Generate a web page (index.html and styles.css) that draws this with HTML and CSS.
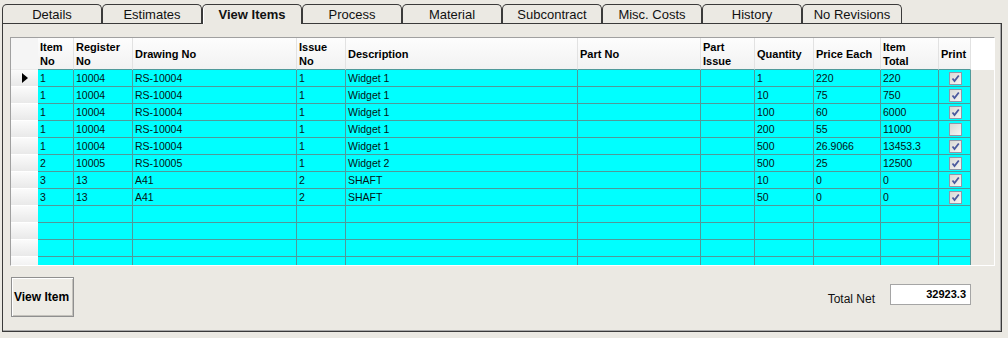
FILE: index.html
```html
<!DOCTYPE html>
<html>
<head>
<meta charset="utf-8">
<link rel="stylesheet" href="styles.css">
</head>
<body>
<div class="tabs">
  <div class="tab">Details</div>
  <div class="tab">Estimates</div>
  <div class="tab active">View Items</div>
  <div class="tab">Process</div>
  <div class="tab">Material</div>
  <div class="tab">Subcontract</div>
  <div class="tab">Misc. Costs</div>
  <div class="tab">History</div>
  <div class="tab">No Revisions</div>
</div>
<div class="panel">
  <div class="grid">
    <div class="hrow">
      <div class="hc rh"></div>
      <div class="hc">Item<br>No</div>
      <div class="hc">Register<br>No</div>
      <div class="hc">Drawing No</div>
      <div class="hc">Issue<br>No</div>
      <div class="hc">Description</div>
      <div class="hc">Part No</div>
      <div class="hc">Part<br>Issue</div>
      <div class="hc">Quantity</div>
      <div class="hc">Price Each</div>
      <div class="hc">Item<br>Total</div>
      <div class="hc">Print</div>
    </div>
    <div class="row"><div class="rh"><span class="arrow"></span></div><div class="c">1</div><div class="c">10004</div><div class="c">RS-10004</div><div class="c">1</div><div class="c">Widget 1</div><div class="c"></div><div class="c"></div><div class="c">1</div><div class="c">220</div><div class="c">220</div><div class="c cb"><span class="box"><svg width="11" height="11" viewBox="0 0 11 11"><path d="M2.5 5.5 L4.5 8 L8.8 2.5" fill="none" stroke="#4b5a9e" stroke-width="1.8"/></svg></span></div></div>
    <div class="row"><div class="rh"></div><div class="c">1</div><div class="c">10004</div><div class="c">RS-10004</div><div class="c">1</div><div class="c">Widget 1</div><div class="c"></div><div class="c"></div><div class="c">10</div><div class="c">75</div><div class="c">750</div><div class="c cb"><span class="box"><svg width="11" height="11" viewBox="0 0 11 11"><path d="M2.5 5.5 L4.5 8 L8.8 2.5" fill="none" stroke="#4b5a9e" stroke-width="1.8"/></svg></span></div></div>
    <div class="row"><div class="rh"></div><div class="c">1</div><div class="c">10004</div><div class="c">RS-10004</div><div class="c">1</div><div class="c">Widget 1</div><div class="c"></div><div class="c"></div><div class="c">100</div><div class="c">60</div><div class="c">6000</div><div class="c cb"><span class="box"><svg width="11" height="11" viewBox="0 0 11 11"><path d="M2.5 5.5 L4.5 8 L8.8 2.5" fill="none" stroke="#4b5a9e" stroke-width="1.8"/></svg></span></div></div>
    <div class="row"><div class="rh"></div><div class="c">1</div><div class="c">10004</div><div class="c">RS-10004</div><div class="c">1</div><div class="c">Widget 1</div><div class="c"></div><div class="c"></div><div class="c">200</div><div class="c">55</div><div class="c">11000</div><div class="c cb"><span class="box"></span></div></div>
    <div class="row"><div class="rh"></div><div class="c">1</div><div class="c">10004</div><div class="c">RS-10004</div><div class="c">1</div><div class="c">Widget 1</div><div class="c"></div><div class="c"></div><div class="c">500</div><div class="c">26.9066</div><div class="c">13453.3</div><div class="c cb"><span class="box"><svg width="11" height="11" viewBox="0 0 11 11"><path d="M2.5 5.5 L4.5 8 L8.8 2.5" fill="none" stroke="#4b5a9e" stroke-width="1.8"/></svg></span></div></div>
    <div class="row"><div class="rh"></div><div class="c">2</div><div class="c">10005</div><div class="c">RS-10005</div><div class="c">1</div><div class="c">Widget 2</div><div class="c"></div><div class="c"></div><div class="c">500</div><div class="c">25</div><div class="c">12500</div><div class="c cb"><span class="box"><svg width="11" height="11" viewBox="0 0 11 11"><path d="M2.5 5.5 L4.5 8 L8.8 2.5" fill="none" stroke="#4b5a9e" stroke-width="1.8"/></svg></span></div></div>
    <div class="row"><div class="rh"></div><div class="c">3</div><div class="c">13</div><div class="c">A41</div><div class="c">2</div><div class="c">SHAFT</div><div class="c"></div><div class="c"></div><div class="c">10</div><div class="c">0</div><div class="c">0</div><div class="c cb"><span class="box"><svg width="11" height="11" viewBox="0 0 11 11"><path d="M2.5 5.5 L4.5 8 L8.8 2.5" fill="none" stroke="#4b5a9e" stroke-width="1.8"/></svg></span></div></div>
    <div class="row"><div class="rh"></div><div class="c">3</div><div class="c">13</div><div class="c">A41</div><div class="c">2</div><div class="c">SHAFT</div><div class="c"></div><div class="c"></div><div class="c">50</div><div class="c">0</div><div class="c">0</div><div class="c cb"><span class="box"><svg width="11" height="11" viewBox="0 0 11 11"><path d="M2.5 5.5 L4.5 8 L8.8 2.5" fill="none" stroke="#4b5a9e" stroke-width="1.8"/></svg></span></div></div>
    <div class="row"><div class="rh"></div><div class="c"></div><div class="c"></div><div class="c"></div><div class="c"></div><div class="c"></div><div class="c"></div><div class="c"></div><div class="c"></div><div class="c"></div><div class="c"></div><div class="c"></div></div>
    <div class="row"><div class="rh"></div><div class="c"></div><div class="c"></div><div class="c"></div><div class="c"></div><div class="c"></div><div class="c"></div><div class="c"></div><div class="c"></div><div class="c"></div><div class="c"></div><div class="c"></div></div>
    <div class="row"><div class="rh"></div><div class="c"></div><div class="c"></div><div class="c"></div><div class="c"></div><div class="c"></div><div class="c"></div><div class="c"></div><div class="c"></div><div class="c"></div><div class="c"></div><div class="c"></div></div>
    <div class="row"><div class="rh"></div><div class="c"></div><div class="c"></div><div class="c"></div><div class="c"></div><div class="c"></div><div class="c"></div><div class="c"></div><div class="c"></div><div class="c"></div><div class="c"></div><div class="c"></div></div>
  </div>
  <div class="bottom">
    <button class="btn">View Item</button>
    <div class="spacer"></div>
    <div class="total-label">Total Net</div>
    <div class="total-box">32923.3</div>
  </div>
</div>
</body>
</html>
```
FILE: styles.css
```css
html, body {
  margin: 0;
  padding: 0;
  background: #ebe9e3;
  width: 1008px;
  height: 338px;
  overflow: hidden;
  font-family: "Liberation Sans", Arial, sans-serif;
  color: #000;
}

.tabs {
  display: flex;
  padding: 4px 0 0 2px;
  height: 19px;
}

.tab {
  box-sizing: border-box;
  width: 100px;
  height: 19px;
  border: 1px solid #3a3a3a;
  border-bottom: none;
  border-radius: 5px 5px 0 0;
  font-size: 13px;
  line-height: 20px;
  text-align: center;
  background: #ebe9e3;
  color: #111;
}

.tab.active {
  position: relative;
  z-index: 2;
  height: 20px;
  margin-bottom: -1px;
  font-weight: bold;
  box-shadow: inset 1px 0 0 #fff;
}

.panel {
  position: relative;
  z-index: 1;
  box-sizing: border-box;
  margin-left: 2px;
  width: 1000px;
  height: 309px;
  border: 1px solid #3a3a3a;
  box-shadow: inset -1px -1px 0 #a8a8a8;
  padding: 13px 0 0 7px;
  display: flex;
  flex-direction: column;
}

.grid {
  box-sizing: border-box;
  width: 985px;
  height: 229px;
  border: 1px solid;
  border-color: #a0a0a0 #fff #fff #a0a0a0;
  background: #ebe9e3;
  overflow: hidden;
  flex: none;
}

.hrow, .row {
  display: grid;
  grid-template-columns: 27px 36px 59px 164px 49px 232px 123px 54px 59px 67px 58px 32px;
}

.hrow {
  height: 32px;
  background: #fff;
}

.hc {
  box-sizing: border-box;
  height: 32px;
  display: flex;
  align-items: center;
  padding-left: 2px;
  font-size: 11px;
  font-weight: bold;
  line-height: 14px;
  background: linear-gradient(#fdfdfd, #f2f2f2);
  border-right: 1px solid #e2e2e2;
  border-bottom: 1px solid #4f9a9a;
}

.hc.rh {
  border-right: none;
  border-bottom: 1px solid #ececec;
  background: #f5f5f5;
}

.row {
  height: 17px;
}

.row .rh {
  box-sizing: border-box;
  height: 17px;
  background: linear-gradient(#fbfbfb, #e9e9e9);
  border-bottom: 1px solid #fff;
  display: flex;
  align-items: center;
  justify-content: center;
}

.arrow {
  display: block;
  width: 0;
  height: 0;
  border-left: 6px solid #000;
  border-top: 5px solid transparent;
  border-bottom: 5px solid transparent;
  margin-left: 1px;
}

.c {
  box-sizing: border-box;
  height: 17px;
  background: #00ffff;
  border-right: 1px solid #4f9a9a;
  border-bottom: 1px solid #4f9a9a;
  padding-left: 2px;
  font-size: 10.5px;
  line-height: 16px;
  white-space: nowrap;
  overflow: hidden;
  color: #061414;
}

.c.cb {
  display: flex;
  align-items: center;
  justify-content: center;
  padding-left: 0;
}

.box {
  box-sizing: border-box;
  width: 13px;
  height: 13px;
  border: 1px solid #8e97a8;
  background: linear-gradient(135deg, #d8d8d4, #f6f6f4);
  display: flex;
  align-items: center;
  justify-content: center;
  margin-left: 1px;
}

.box svg {
  display: block;
}

.bottom {
  display: flex;
  align-items: flex-start;
  margin-top: 11px;
  height: 40px;
}

.btn {
  box-sizing: border-box;
  width: 63px;
  height: 40px;
  margin: 0 0 0 1px;
  padding: 0 0 0 2px;
  border: 1px solid #8f8f8f;
  background: #eeece6;
  box-shadow: inset 1px 1px 0 #fff, inset -1px -1px 0 #c4c2bc;
  font-family: "Liberation Sans", Arial, sans-serif;
  font-size: 12px;
  font-weight: bold;
  color: #000;
  text-align: left;
  white-space: nowrap;
}

.spacer {
  flex: 1;
}

.total-label {
  font-size: 12px;
  line-height: 14px;
  margin-top: 15px;
  margin-right: 15px;
  color: #111;
}

.total-box {
  box-sizing: border-box;
  width: 81px;
  height: 21px;
  margin-top: 7px;
  margin-right: 30px;
  border: 1px solid #a5a5a5;
  background: #fff;
  font-size: 11px;
  font-weight: bold;
  line-height: 19px;
  text-align: right;
  padding-right: 4px;
}
```
